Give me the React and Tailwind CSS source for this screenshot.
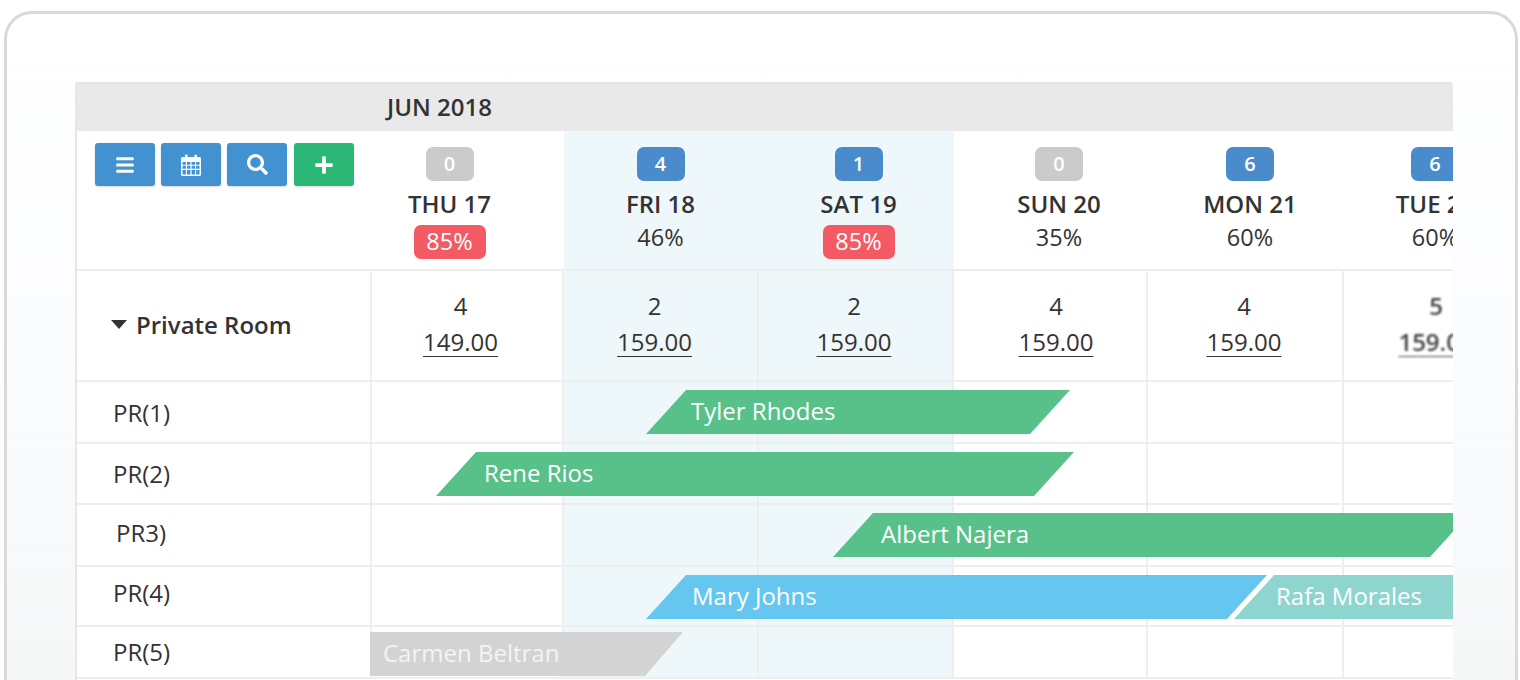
import { FaBars, FaSearch, FaPlus } from 'react-icons/fa';

const GRID = 'grid grid-cols-[295px_192px_195px_195px_194px_196px_196px]';

const days = [
  { count: 0, label: 'THU 17', pct: '85%', alert: true, offset: 'pr-[37px]' },
  { count: 4, label: 'FRI 18', pct: '46%', weekend: true, offset: 'pr-[2px]' },
  { count: 1, label: 'SAT 19', pct: '85%', alert: true, weekend: true, offset: 'pl-[4px]' },
  { count: 0, label: 'SUN 20', pct: '35%', offset: 'pl-[16px]' },
  { count: 6, label: 'MON 21', pct: '60%', offset: 'pl-2' },
  { count: 6, label: 'TUE 22', pct: '60%', offset: 'pr-[14px]' },
];

const rates = [
  { left: 4, price: '149.00', offset: 'pr-[13px]' },
  { left: 2, price: '159.00', offset: 'pr-3', weekend: true },
  { left: 2, price: '159.00', offset: 'pr-[3px]', weekend: true },
  { left: 4, price: '159.00', offset: 'pl-3' },
  { left: 4, price: '159.00', offset: 'pr-[2px]' },
  { left: 5, price: '159.00', offset: 'pr-[10px]', blurred: true },
];

const rooms = [
  { name: 'PR(1)', height: 'h-[62px]', pad: 'pt-[2px]' },
  { name: 'PR(2)', height: 'h-[61px]', pad: '' },
  { name: 'PR3)', height: 'h-[62px]', pad: 'pb-[4px]' },
  { name: 'PR(4)', height: 'h-[60px]', pad: 'pb-[6px]' },
  { name: 'PR(5)', height: 'h-[52px]', pad: '' },
];

const SLANT = '[clip-path:polygon(40px_0,100%_0,calc(100%-40px)_100%,0_100%)]';

const bookings = [
  { name: 'Tyler Rhodes', box: 'left-[569px] top-[8px] w-[424px] pl-[45px] bg-[#58c189] text-white', shape: SLANT },
  { name: 'Rene Rios', box: 'left-[359px] top-[70px] w-[638px] pl-[48px] bg-[#58c189] text-white', shape: SLANT },
  { name: 'Albert Najera', box: 'left-[756px] top-[131px] w-[637px] pl-[48px] bg-[#58c189] text-white', shape: SLANT },
  { name: 'Mary Johns', box: 'left-[569px] top-[193px] w-[621px] pl-[46px] bg-[#65c6f0] text-white', shape: SLANT },
  { name: 'Rafa Morales', box: 'left-[1157px] top-[193px] w-[300px] pl-[42px] bg-[#8ed5d0] text-white', shape: SLANT },
  { name: 'Carmen Beltran', box: 'left-[293px] top-[250px] w-[313px] pl-[13px] bg-[#d3d3d3] text-[#f4f4f4]', shape: '[clip-path:polygon(0_0,100%_0,calc(100%-38px)_100%,0_100%)]' },
];

function CalendarIcon() {
  return (
    <svg width="20" height="22" viewBox="0 0 20 22" fill="white">
      <path fillRule="evenodd" d="M1.5 3H4V1.8a1.3 1.3 0 0 1 2.6 0V3h6.8V1.8a1.3 1.3 0 0 1 2.6 0V3h2.5A1.5 1.5 0 0 1 20 4.5v16a1.5 1.5 0 0 1-1.5 1.5h-17A1.5 1.5 0 0 1 0 20.500v-16A1.500 1.500 0 0 1 1.500 3ZM1.500 8v2.700h3.400V8Zm4.500 0v2.700h3.400V8Zm4.600 0v2.700H14V8Zm4.500 0v2.700h3.400V8ZM1.500 11.800v3h3.400v-3Zm4.500 0v3h3.400v-3Zm4.600 0v3H14v-3Zm4.500 0v3h3.400v-3ZM1.500 15.900v4.600h3.400v-4.600Zm4.500 0v4.600h3.400v-4.600Zm4.600 0v4.600H14v-4.600Zm4.500 0v4.600h3.400v-4.600Z" />
    </svg>
  );
}

function ToolButton({ color, children }) {
  return (
    <button className={`flex h-[43px] w-[60px] items-center justify-center rounded-[3px] text-white shadow-[0_1px_2px_rgba(0,0,0,0.15)] ${color}`}>
      {children}
    </button>
  );
}

function DayHeader({ day }) {
  return (
    <div className={`flex flex-col items-center pt-[16px] ${day.weekend ? 'bg-[#eef7fa]' : ''} ${day.offset}`}>
      <span className={`flex h-[34px] w-[48px] items-center justify-center rounded-[7px] text-[20px] font-semibold text-white ${day.count === 0 ? 'bg-[#cbcbcb]' : 'bg-[#4a8bcb]'}`}>
        {day.count}
      </span>
      <span className="mt-[4px] text-[24px] leading-[38px] font-semibold whitespace-nowrap">{day.label}</span>
      {day.alert ? (
        <span className="mt-[2px] flex h-[34px] w-[72px] items-center justify-center rounded-[7px] bg-[#f45a64] text-[23.5px] text-white">{day.pct}</span>
      ) : (
        <span className="-mt-[3px] text-[23.5px] leading-[34px]">{day.pct}</span>
      )}
    </div>
  );
}

function RateCell({ rate }) {
  return (
    <div className={`flex flex-col items-center border-r-2 border-[#eeeeee] pt-[17px] text-[24px] leading-[36px] ${rate.weekend ? 'bg-[#eef7fa]' : ''} ${rate.offset}`}>
      <div className={`flex flex-col items-center ${rate.blurred ? 'font-semibold text-[#444444] blur-[0.8px]' : ''}`}>
        <span>{rate.left}</span>
        <span className="underline decoration-1 underline-offset-[5px]">{rate.price}</span>
      </div>
    </div>
  );
}

function RoomRow({ room }) {
  return (
    <div className={`${GRID} ${room.height} border-b-2 border-[#eeeeee]`}>
      <div className={`flex items-center border-r-2 border-[#eeeeee] pl-[36px] text-[24px] ${room.pad}`}>
        <span className="w-[56px] text-center">{room.name}</span>
      </div>
      {rates.map((rate, index) => (
        <div key={index} className={`border-r-2 border-[#eeeeee] ${rate.weekend ? 'bg-[#eef7fa]' : ''}`} />
      ))}
    </div>
  );
}

export default function App() {
  return (
    <div className="h-[680px] overflow-hidden bg-white pt-[11px] pr-[2px] pl-[4px] font-['Open_Sans',sans-serif] text-[#333333]">
      <div className="h-[700px] rounded-t-[28px] border-[3px] border-[#d9d9d9] bg-gradient-to-b from-white via-[#fbfcfe] to-[#f5f6f6] pt-[68px] pl-[68px]">
        <div className="h-[598px] w-[1378px] overflow-hidden rounded-t-[3px] border-t-2 border-l-2 border-[#e6e6e6] bg-white">
          <div className="h-[47px] bg-[#e9e9e9] pl-[310px] text-[24px] leading-[45px] font-semibold">JUN 2018</div>

          <div className={`${GRID} h-[140px] border-b-2 border-[#eeeeee]`}>
            <div className="flex items-start gap-[6px] pt-[12px] pl-[18px]">
              <ToolButton color="bg-[#4291d0]"><FaBars size={20} /></ToolButton>
              <ToolButton color="bg-[#4291d0]"><CalendarIcon /></ToolButton>
              <ToolButton color="bg-[#4291d0]"><FaSearch size={21} /></ToolButton>
              <div className="ml-px">
                <ToolButton color="bg-[#2bb775]"><FaPlus size={20} /></ToolButton>
              </div>
            </div>
            {days.map((day) => (
              <DayHeader key={day.label} day={day} />
            ))}
          </div>

          <div className={`${GRID} h-[111px] border-b-2 border-[#eeeeee]`}>
            <div className="flex items-center gap-[9px] border-r-2 border-[#eeeeee] pb-[2px] pl-[34px]">
              <svg width="16" height="9" viewBox="0 0 16 9" fill="#333333"><polygon points="0,0 16,0 8,9" /></svg>
              <span className="text-[24px] font-semibold">Private Room</span>
            </div>
            {rates.map((rate, index) => (
              <RateCell key={index} rate={rate} />
            ))}
          </div>

          <div className="relative">
            {rooms.map((room) => (
              <RoomRow key={room.name} room={room} />
            ))}
            {bookings.map((booking) => (
              <div key={booking.name} className={`absolute flex h-[44px] items-center pb-[2px] text-[24px] whitespace-nowrap ${booking.box} ${booking.shape}`}>
                {booking.name}
              </div>
            ))}
          </div>
        </div>
      </div>
    </div>
  );
}
